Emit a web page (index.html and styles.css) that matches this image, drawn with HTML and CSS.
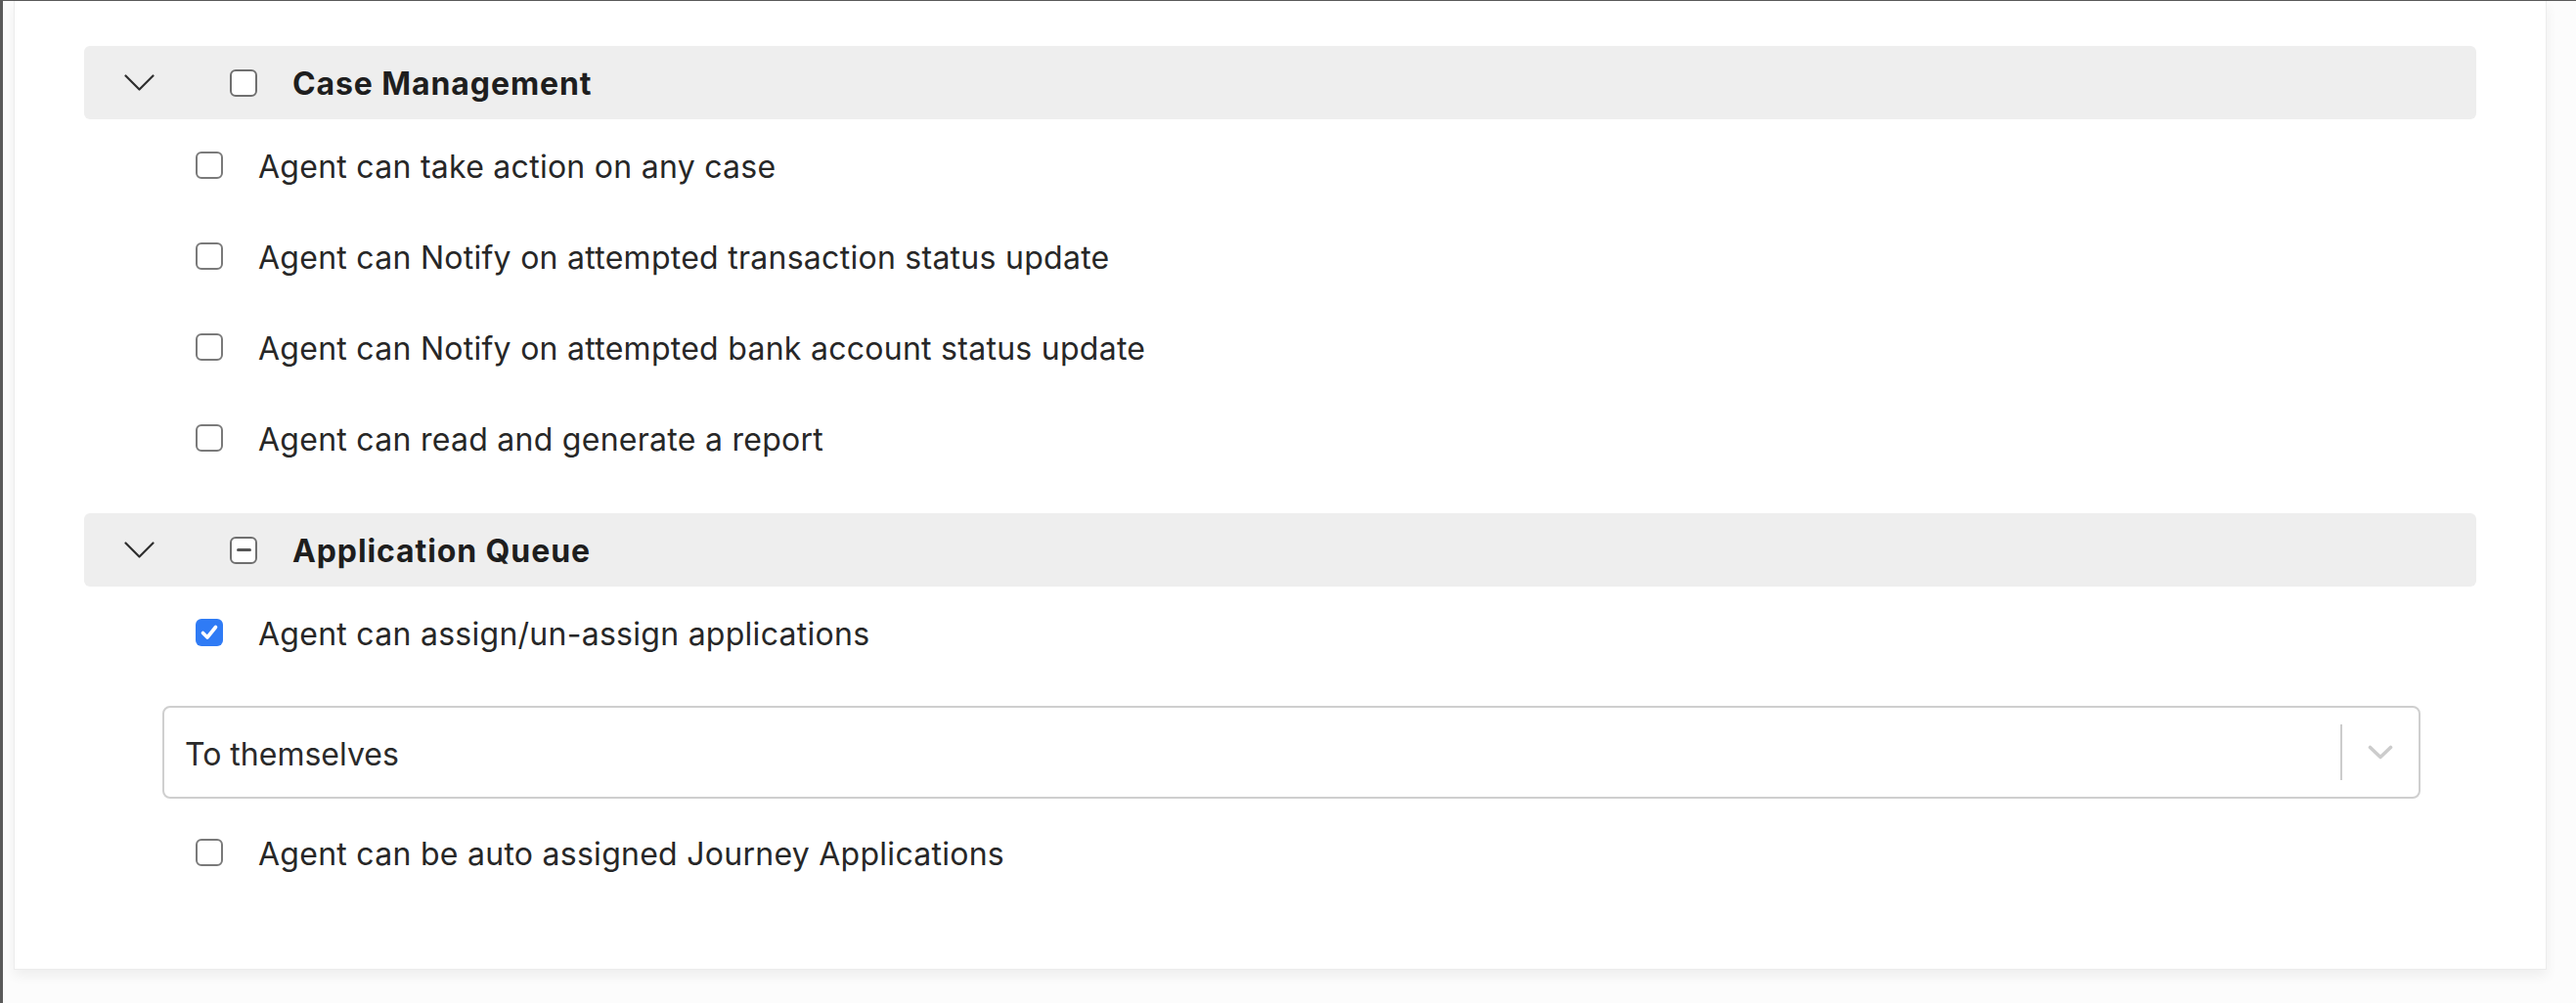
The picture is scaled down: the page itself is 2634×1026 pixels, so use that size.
FILE: index.html
```html
<!DOCTYPE html>
<html lang="en">
<head>
<meta charset="utf-8">
<title>Permissions</title>
<link rel="stylesheet" href="styles.css">
</head>
<body>
<div class="frame">
  <div class="card">
    <section class="group">
      <div class="group-header">
        <svg class="chev" width="31" height="17" viewBox="0 0 31 17"><path d="M1.5 1.5 L15.5 15.5 L29.5 1.5" fill="none" stroke="#2e2e2e" stroke-width="2.2" stroke-linecap="round" stroke-linejoin="round"/></svg>
        <span class="cb cb-head"></span>
        <span class="group-title">Case Management</span>
      </div>
      <div class="item"><span class="cb"></span><span class="label">Agent can take action on any case</span></div>
      <div class="item"><span class="cb"></span><span class="label">Agent can Notify on attempted transaction status update</span></div>
      <div class="item"><span class="cb"></span><span class="label">Agent can Notify on attempted bank account status update</span></div>
      <div class="item"><span class="cb"></span><span class="label">Agent can read and generate a report</span></div>
    </section>
    <section class="group group-second">
      <div class="group-header">
        <svg class="chev" width="31" height="17" viewBox="0 0 31 17"><path d="M1.5 1.5 L15.5 15.5 L29.5 1.5" fill="none" stroke="#2e2e2e" stroke-width="2.2" stroke-linecap="round" stroke-linejoin="round"/></svg>
        <span class="cb cb-head cb-ind"><span class="dash"></span></span>
        <span class="group-title">Application Queue</span>
      </div>
      <div class="item"><span class="cb cb-on"><svg width="28" height="28" viewBox="0 0 28 28"><path d="M7.5 14.5 L12 19 L20.5 8.5" fill="none" stroke="#ffffff" stroke-width="3.6" stroke-linecap="round" stroke-linejoin="round"/></svg></span><span class="label">Agent can assign/un-assign applications</span></div>
      <div class="select">
        <span class="select-value">To themselves</span>
        <span class="select-sep"></span>
        <span class="select-ind"><svg width="26" height="15" viewBox="0 0 26 15"><path d="M2.5 2.5 L13 12.5 L23.5 2.5" fill="none" stroke="#cccccc" stroke-width="3.6" stroke-linecap="round" stroke-linejoin="round"/></svg></span>
      </div>
      <div class="item item-last"><span class="cb"></span><span class="label">Agent can be auto assigned Journey Applications</span></div>
    </section>
  </div>
</div>
</body>
</html>
```
FILE: styles.css
```css
html, body {
  margin: 0;
  padding: 0;
}
body {
  font-family: Inter, "Noto Sans", "Liberation Sans", sans-serif;
  color: #262626;
  background: #fcfcfc;
}
.frame {
  box-sizing: border-box;
  height: 1026px;
  width: 2634px;
  border-top: 1px solid #5a5a5a;
  border-left: 3px solid #5a5a5a;
  padding-left: 11px;
  background: #fcfcfc;
}
.card {
  box-sizing: border-box;
  width: 2590px;
  background: #ffffff;
  border: 1px solid #ececec;
  border-top: none;
  padding: 46px 71px 73px 71px;
  box-shadow: 0 6px 12px rgba(0, 0, 0, 0.06);
}
.group-second {
  margin-top: 31px;
}
.group-header {
  display: flex;
  align-items: center;
  height: 75px;
  background: #eeeeee;
  border-radius: 6px;
  padding-left: 41px;
}
.chev {
  display: block;
  margin-right: 77px;
  flex: none;
}
.cb {
  box-sizing: border-box;
  width: 28px;
  height: 28px;
  flex: none;
  border: 2px solid #7a7a7a;
  border-radius: 6px;
  background: #ffffff;
  display: flex;
  align-items: center;
  justify-content: center;
}
.cb-head {
  margin-right: 36px;
  border-color: #6f6f6f;
}
.cb-ind .dash {
  display: block;
  width: 15px;
  height: 3px;
  border-radius: 2px;
  background: #555555;
}
.cb-on {
  border: none;
  background: #2f7bf5;
}
.cb-on svg {
  display: block;
}
.group-title {
  font-size: 32px;
  font-weight: 700;
  color: #1e1e1e;
  letter-spacing: 0.9px;
  padding-top: 2px;
}
.item {
  display: flex;
  align-items: center;
  height: 93px;
  padding-left: 114px;
}
.item .cb {
  margin-right: 36px;
}
.label {
  font-size: 32px;
  color: #272727;
  letter-spacing: 0.27px;
  padding-top: 4px;
}
.select {
  box-sizing: border-box;
  display: flex;
  align-items: center;
  height: 95px;
  margin: 29px 57px 0 80px;
  border: 2px solid #cfcfcf;
  border-radius: 8px;
  padding-left: 21px;
  background: #ffffff;
}
.select-value {
  flex: 1;
  font-size: 32px;
  color: #2a2a2a;
  padding-top: 4px;
}
.select-sep {
  width: 2px;
  height: 57px;
  background: #cccccc;
  flex: none;
}
.select-ind {
  width: 78px;
  display: flex;
  align-items: center;
  justify-content: center;
  flex: none;
}
.select-ind svg {
  display: block;
}
.item-last {
  margin-top: 8px;
}
```
